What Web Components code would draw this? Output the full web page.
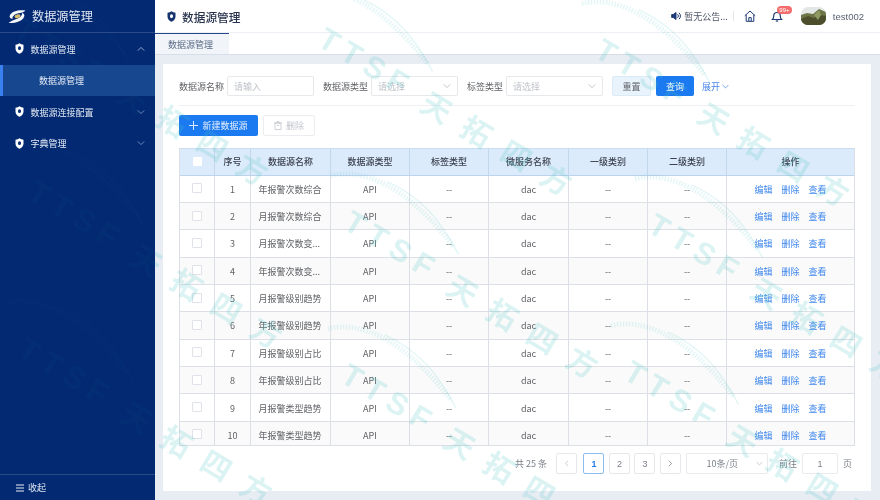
<!DOCTYPE html>
<html lang="zh">
<head>
<meta charset="utf-8">
<title>数据源管理</title>
<style>
html,body{margin:0;padding:0;width:880px;height:500px;overflow:hidden;background:#e8edf4}
body{font-family:"Noto Sans CJK SC","Liberation Sans",sans-serif;font-size:9px;color:#606266}
</style>
</head>
<body>
<app-shell>
  <side-nav slot="side"></side-nav>
  <top-bar slot="top"></top-bar>
  <tab-strip slot="tabs"></tab-strip>
  <content-card slot="main">
    <filter-bar></filter-bar>
    <tool-bar></tool-bar>
    <data-table></data-table>
    <page-bar></page-bar>
  </content-card>
  <water-mark slot="over" data-x="133" data-y="97"></water-mark>
  <water-mark slot="over" data-x="437" data-y="107"></water-mark>
  <water-mark slot="over" data-x="714" data-y="118"></water-mark>
  <water-mark slot="over" data-x="147" data-y="260"></water-mark>
  <water-mark slot="over" data-x="463" data-y="290"></water-mark>
  <water-mark slot="over" data-x="767" data-y="293"></water-mark>
  <water-mark slot="over" data-x="137" data-y="417"></water-mark>
  <water-mark slot="over" data-x="460" data-y="443"></water-mark>
  <water-mark slot="over" data-x="743" data-y="440"></water-mark>
</app-shell>
<script>
const FONT='"Noto Sans CJK SC","Liberation Sans",sans-serif';
const chev=(c,s=7,up=false)=>`<svg width="${s}" height="${s}" viewBox="0 0 10 10" fill="none" stroke="${c}" stroke-width="1.1" style="flex:none${up?';transform:rotate(180deg)':''}"><path d="M1 3l4 4 4-4"/></svg>`;
const shield=(fill,hole,w=9,h=11)=>`<svg width="${w}" height="${h}" viewBox="0 0 18 22" style="flex:none"><path d="M9 0.5c2.2 1.6 5 2.6 8 2.8v8c0 4.6-3.4 8-8 10.2-4.6-2.2-8-5.6-8-10.2v-8c3-.2 5.800-1.200 8-2.800z" fill="${fill}"/><path d="M9 6.500a3 3 0 0 1 3 3v1.500a3 3 0 0 1-6 0V9.500a3 3 0 0 1 3-3z" fill="${hole}"/></svg>`;
class Base extends HTMLElement{
  constructor(){super();this.attachShadow({mode:'open'});}
  connectedCallback(){this.shadowRoot.innerHTML=this.render();}
}
class AppShell extends Base{render(){return `<style>
:host{display:grid;grid-template-columns:155px 725px;grid-template-rows:33px 22px 445px;width:880px;height:500px;position:relative;overflow:hidden;font-family:${FONT};background:linear-gradient(90deg,#022a72 155px,#e8edf4 155px);filter:blur(.3px)}
.side{grid-row:1/4;position:relative;z-index:2}
.main{display:flex;flex-direction:column;min-height:0;padding:9px 9px 9px 8px;background:#e8edf4}
.over{position:absolute;inset:0;pointer-events:none;overflow:hidden;z-index:1}
</style>
<div class="side"><slot name="side"></slot></div>
<slot name="top"></slot><slot name="tabs"></slot>
<div class="main"><slot name="main"></slot></div>
<div class="over"><slot name="over"></slot></div>`}}
customElements.define('app-shell',AppShell);

class NavItem extends Base{render(){
  const open=this.hasAttribute('open');
  return `<style>
:host{display:flex;align-items:center;height:31.500px;padding:0 10px 0 15px;color:#e4eaf5;font-size:9px;gap:6.500px}
span{flex:1;white-space:nowrap;padding-top:1px}
</style>${shield('#fff','#0a2f74')}<span><slot></slot></span>${chev(open?'#a9bbdc':'#7d97c8',8,open)}`}}
customElements.define('nav-item',NavItem);

class SideNav extends Base{render(){return `<style>
:host{display:flex;flex-direction:column;height:500px;width:155px;background:rgba(2,42,114,.82);color:#fff;font-family:${FONT}}
.brand{height:33px;box-sizing:border-box;display:flex;align-items:center;gap:6px;padding-left:8px;border-bottom:1px solid #2a4b88;font-size:12.200px;color:#dfe6f2}
.sub{height:31.500px;box-sizing:border-box;display:flex;align-items:center;padding-left:36px;background:#17478f;border-left:3px solid #3a80f0;font-size:9px;color:#e4eaf5}
.fill{flex:1}
.foot{height:25px;border-top:1px solid #2a4b88;display:flex;align-items:center;padding-left:16px;gap:3px;font-size:9px;color:#dfe6f2}
</style>
<div class="brand">
<svg width="18" height="15" viewBox="0 0 36 30" style="flex:none"><path d="M35 3C22 1 8 4 4 12c-2 4 0 7 5 8-1-6 6-11 15-12 4-.5 8-2.500 11-5z" fill="#f4f7fb"/><path d="M1 28c12 1 27-3 31-12 2-4 0-7-4-8 1 6-6 11-14 13-5 1.500-9 4-13 7z" fill="#f4f7fb"/><ellipse cx="19" cy="14.500" rx="6" ry="3.500" transform="rotate(-15 19 14.500)" fill="#d8bd6a"/></svg>
<span>数据源管理</span></div>
<nav-item open>数据源管理</nav-item>
<div class="sub">数据源管理</div>
<nav-item>数据源连接配置</nav-item>
<nav-item>字典管理</nav-item>
<div class="fill"></div>
<div class="foot"><svg width="9" height="8" viewBox="0 0 9 8" stroke="#e8edf6" stroke-width="1.100"><path d="M0 1h8M0 4h8M0 7h8"/></svg><span>收起</span></div>`}}
customElements.define('side-nav',SideNav);

class TopBar extends Base{render(){return `<style>
:host{display:flex;align-items:center;height:33px;box-sizing:border-box;background:#fff;border-bottom:1px solid #eceff4;padding:0 16px 0 12px;font-family:${FONT};color:#4d5a70}
.title{font-size:11.700px;font-weight:500;color:#28344d;margin-left:6px;flex:1;white-space:nowrap}
.notice{display:flex;align-items:center;gap:2px;font-size:9px;color:#4d5566;white-space:nowrap}
.sep{width:1px;height:10px;background:#e6e9ef;margin:0 10px 0 5px}
.bell{position:relative;display:flex;margin-left:15px}
.badge{position:absolute;left:6px;top:-4px;height:8px;padding:0 2.500px;border-radius:5px;background:#f56c6c;color:#fff;font-size:6px;line-height:8px;white-space:nowrap;font-family:"Liberation Sans",sans-serif}
.user{font-size:9.500px;color:#5a6272;margin-left:7px;white-space:nowrap;font-family:"Liberation Sans",sans-serif}
.ava{margin-left:18px;flex:none}
</style>
${shield('#16346f','#fff',9,11)}
<div class="title">数据源管理</div>
<div class="notice"><svg width="11" height="10" viewBox="0 0 11 10" fill="none" stroke="#1d3a76" stroke-width="1"><path d="M.7 3.500h1.600L5 1.500v7L2.300 6.500H.7z" fill="#1d3a76"/><path d="M6.500 3.300a2.200 2.200 0 0 1 0 3.400M8 1.800a4.300 4.300 0 0 1 0 6.400"/></svg><span>暂无公告...</span></div>
<div class="sep"></div>
<svg width="12" height="12" viewBox="0 0 12 12" fill="none" stroke="#1d3a76" stroke-width="1" style="flex:none"><path d="M.8 5.800L6 1l5.200 4.800M2.200 4.800v6.500h7.600V4.800"/><path d="M4.800 11.300V7.600h2.400v3.700"/></svg>
<div class="bell"><svg width="12" height="12" viewBox="0 0 12 12" fill="none" stroke="#1d3a76" stroke-width="1.200"><path d="M1.500 9.500c1-1 1.200-2 1.200-3.500C2.700 4 4 2.500 6 2.500S9.300 4 9.300 6c0 1.500.2 2.500 1.200 3.500z"/><path d="M4.800 11h2.400"/></svg><span class="badge">99+</span></div>
<svg class="ava" width="25" height="18" viewBox="0 0 25 18"><defs><clipPath id="c"><rect width="25" height="18" rx="7"/></clipPath></defs><g clip-path="url(#c)"><rect width="25" height="18" fill="#e3e8e6"/><path d="M0 8l6-2 6 1 6-5 7 3v13H0z" fill="#6e7647"/><path d="M0 12l7-3 6 2 5-3 7 1v9H0z" fill="#4d4f2c"/><path d="M13 8l5-5 2 5-3 5z" fill="#8e9a62"/></g></svg>
<span class="user">test002</span>`}}
customElements.define('top-bar',TopBar);

class TabStrip extends Base{render(){return `<style>
:host{display:flex;height:22px;box-sizing:border-box;background:#fff;border-bottom:1px solid #d9dfe8;font-family:${FONT}}
.tab{width:74px;box-sizing:border-box;height:21px;border-top:1px solid #24468a;background:#f1f4f9;color:#5a6b86;font-size:9px;display:flex;align-items:center;padding-left:13px}
</style><div class="tab">数据源管理</div>`}}
customElements.define('tab-strip',TabStrip);

class ContentCard extends Base{render(){return `<style>
:host{display:flex;flex-direction:column;flex:1;height:427px;box-sizing:border-box;background:#fff;padding:12px 16px 0}
</style><slot></slot>`}}
customElements.define('content-card',ContentCard);

class FormField extends Base{render(){
  const sel=this.hasAttribute('select');
  return `<style>
:host{display:flex;align-items:center;font-size:9px;color:#606266;white-space:nowrap}
.l{margin-right:3px}
.b{width:var(--w,87px);height:20px;box-sizing:border-box;border:1px solid #e6e8ec;border-radius:2px;display:flex;align-items:center;justify-content:space-between;padding:0 6px;color:#bfc3ca}
</style><span class="l">${this.getAttribute('label')}</span><div class="b"><span>${this.getAttribute('hint')}</span>${sel?chev('#b8bcc4',8):''}</div>`}}
customElements.define('form-field',FormField);

class FilterBar extends Base{render(){return `<style>
:host{display:flex;align-items:center;padding-bottom:9px;border-bottom:1px solid #eef0f3;font-family:${FONT};box-sizing:content-box;height:20px}
.btn{height:20px;box-sizing:border-box;display:flex;align-items:center;justify-content:center;font-size:9px;border-radius:2px}
.r{width:39px;background:#e8f3fc;border:1px solid #dbeaf7;color:#606266;margin-left:9px}
.q{width:38px;background:#1c7af0;color:#fff;margin-left:5px}
.x{display:flex;align-items:center;gap:2px;color:#4a86e8;font-size:9px;margin-left:8px;white-space:nowrap}
form-field{margin-right:9px}
</style>
<form-field label="数据源名称" hint="请输入"></form-field>
<form-field label="数据源类型" hint="请选择" select></form-field>
<form-field label="标签类型" hint="请选择" select style="--w:97px;margin-right:0"></form-field>
<div class="btn r">重置</div><div class="btn q">查询</div>
<div class="x">展开${chev('#4a86e8',7)}</div>`}}
customElements.define('filter-bar',FilterBar);

class ToolBar extends Base{render(){return `<style>
:host{display:flex;gap:5px;margin-top:9px;margin-bottom:12px;font-family:${FONT};font-size:9px}
div{height:21px;box-sizing:border-box;display:flex;align-items:center;justify-content:center;border-radius:2px;gap:4px;white-space:nowrap}
.a{width:79px;background:#1c7af0;color:#e8f1ff}
.b{width:52px;border:1px solid #ebedf0;color:#c3c6cc}
</style>
<div class="a"><svg width="9" height="9" viewBox="0 0 9 9" stroke="#dbe8ff" stroke-width="1"><path d="M4.500 0v9M0 4.500h9"/></svg>新建数据源</div>
<div class="b"><svg width="8" height="9" viewBox="0 0 8 9" fill="none" stroke="#c3c6cc" stroke-width=".8"><path d="M1 2h6v6.500H1zM0 2h8M3 2V.6h2V2M3 4.500h2"/></svg>删除</div>`}}
customElements.define('tool-bar',ToolBar);

class DataTable extends Base{render(){
  const names=['年报警次数综合','月报警次数综合','月报警次数变...','年报警次数变...','月报警级别趋势','年报警级别趋势','月报警级别占比','年报警级别占比','月报警类型趋势','年报警类型趋势'];
  const rows=names.map((n,i)=>`<div class="row${i%2?' alt':''}">
<div class="c"><i class="cb"></i></div><div class="c">${i+1}</div><div class="c"><span class="nm">${n}</span></div><div class="c">API</div><div class="c">--</div><div class="c">dac</div><div class="c">--</div><div class="c">--</div>
<div class="c ops"><a>编辑</a><a>删除</a><a>查看</a></div></div>`).join('');
  return `<style>
:host{display:block;height:298px;width:676px;box-sizing:border-box;overflow:hidden;border:1px solid #dcdfe6;border-top-color:#c9dcf0;font-family:${FONT};font-size:9px;color:#606266}
.row{display:grid;grid-template-columns:35px 36px 80px 79px 79px 80px 79px 79px 1fr;height:27.360px;box-sizing:border-box;border-bottom:1px solid #dcdfe6;background:#fff}
.alt{background:#fafafa}
.head{background:#dcebfb;color:#3c4250;font-weight:500;height:26.500px;border-bottom-color:#bcd3ea}
.c{display:flex;align-items:center;justify-content:center;border-right:1px solid #dcdfe6;min-width:0;white-space:nowrap;box-sizing:border-box;padding-top:1px}
.head .c{border-right-color:#c3d7ec;padding-top:0}
.c:last-child{border-right:0}
.nm{display:block;width:64px}
.cb{width:10px;height:10px;box-sizing:border-box;border:1px solid #dfe2e8;border-radius:1px;background:#fff;margin-top:-2px}
.head .cb{border:0;width:9px;height:9px;margin-top:0}
.ops{gap:9px;color:#3f87ec}
</style>
<div class="row head"><div class="c"><i class="cb"></i></div><div class="c">序号</div><div class="c">数据源名称</div><div class="c">数据源类型</div><div class="c">标签类型</div><div class="c">微服务名称</div><div class="c">一级类别</div><div class="c">二级类别</div><div class="c">操作</div></div>
${rows}`}}
customElements.define('data-table',DataTable);

class PageBar extends Base{render(){
  const arrow=d=>`<svg width="6" height="7" viewBox="0 0 6 7" fill="none" stroke="${d=='l'?'#c4c7cd':'#8a8f98'}" stroke-width=".9"><path d="${d=='l'?'M4 .8L1.500 3.500 4 6.200':'M2 .8l2.500 2.700L2 6.200'}"/></svg>`;
  return `<style>
:host{display:flex;align-items:center;justify-content:flex-end;margin-top:7px;height:21px;font-family:${FONT};font-size:9px;color:#7a7f88;white-space:nowrap}
.p{width:21px;height:21px;box-sizing:border-box;border:1px solid #e6e8ec;border-radius:2px;display:flex;align-items:center;justify-content:center;margin-left:4.500px}
.on{border-color:#8cbcf0;color:#2b7de9;font-weight:700;margin-left:6px}
.s{width:82px;height:21px;box-sizing:border-box;border:1px solid #e8eaee;border-radius:2px;display:flex;align-items:center;justify-content:flex-end;gap:18px;padding-right:4px;margin-left:5px}
.i{width:36px;height:21px;box-sizing:border-box;border:1px solid #e8eaee;border-radius:2px;display:flex;align-items:center;justify-content:center;margin:0 5px}
.t{margin-right:5px}.g{margin-left:11px}
.n{font-family:"Liberation Sans",sans-serif}
</style>
<span class="t">共 25 条</span>
<div class="p">${arrow('l')}</div><div class="p on n">1</div><div class="p n">2</div><div class="p n">3</div><div class="p">${arrow('r')}</div>
<div class="s"><span>10条/页</span>${chev('#b8bcc4',7)}</div>
<span class="g">前往</span><div class="i n">1</div><span>页</span><span style="width:3px"></span>`}}
customElements.define('page-bar',PageBar);

class WaterMark extends Base{render(){
  const x=this.dataset.x,y=this.dataset.y;
  return `<style>
:host{position:absolute;left:${x}px;top:${y}px;width:0;height:0;display:block;transform:rotate(31deg);transform-origin:0 0;color:rgba(70,190,190,.19);font-family:"Noto Sans CJK SC",sans-serif;font-weight:700;font-size:30px;line-height:40px;white-space:nowrap}
span{position:absolute;top:-21px}
.a{left:-136px;letter-spacing:7px;font-family:"Liberation Sans",sans-serif;font-weight:700;font-size:31px}
.b{left:-15px;letter-spacing:16.500px}
svg{position:absolute;left:-180px;top:-70px;overflow:visible}
</style>
<svg width="170" height="60" viewBox="0 0 170 60" fill="none" stroke="rgba(70,190,190,.14)"><path d="M8 40C30 18 75 8 150 38" stroke-width="5" stroke-dasharray="1.500 1.500"/><path d="M60 16c36-4 66 6 98 26" stroke-width="1.500"/></svg>
<span class="a">TTSF</span><span class="b">天拓四方</span>`}}
customElements.define('water-mark',WaterMark);
</script>
</body>
</html>
